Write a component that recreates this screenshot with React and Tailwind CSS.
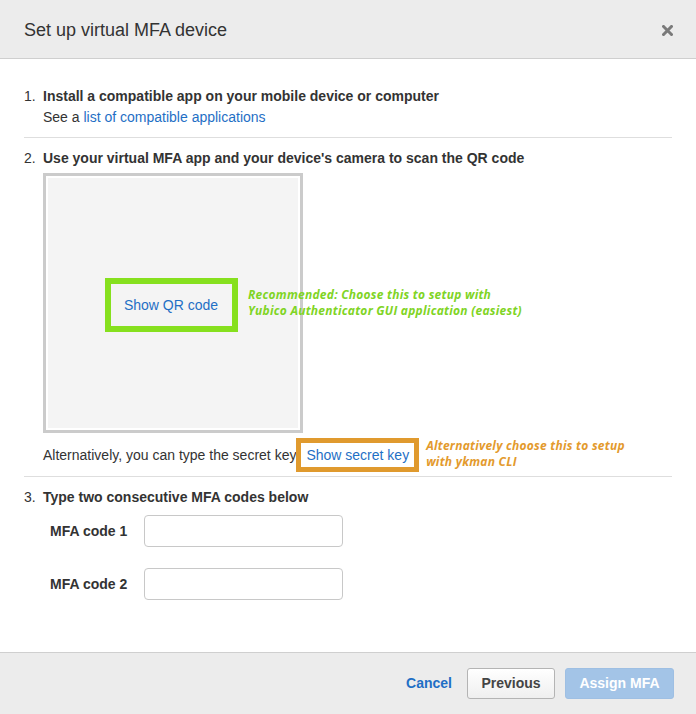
import React from "react";

const font = { fontFamily: '"Liberation Sans", Arial, sans-serif' };
const noteFont = { fontFamily: '"Open Sans", sans-serif' };

function Step({ n, title, children }) {
  return (
    <div className="flex text-[14px] leading-[20px] text-[#333]">
      <span className="w-[19px] shrink-0">{n}.</span>
      <div className="flex-1">
        <div className="font-bold">{title}</div>
        {children}
      </div>
    </div>
  );
}

function CodeField({ label }) {
  return (
    <div className="flex items-center ml-[7px]">
      <span className="w-[94px] font-bold text-[#333] text-[14px]">{label}</span>
      <input
        className="w-[199px] h-[32px] border border-[#c8c8c8] rounded-[4px] bg-white outline-none px-2"
        type="text"
      />
    </div>
  );
}

export default function App() {
  return (
    <div className="w-[696px] h-[714px] bg-white flex flex-col" style={font}>
      {/* Header */}
      <div className="h-[59px] shrink-0 bg-[#ececec] border-b border-[#cfcfcf] flex items-center justify-between pl-6 pr-[22px]">
        <h2 className="text-[18px] text-[#333] mt-[2px]">Set up virtual MFA device</h2>
        <svg width="11" height="11" viewBox="0 0 11 11" className="mr-[1px] mt-[2px]">
          <path d="M1.5 1.5 L9.5 9.5 M9.5 1.5 L1.5 9.5" stroke="#7a7a7a" strokeWidth="3" strokeLinecap="square" />
        </svg>
      </div>

      {/* Body */}
      <div className="flex-1 px-6 pt-[27px]">
        <Step n="1" title="Install a compatible app on your mobile device or computer">
          <div className="mt-[1px]">
            See a <a className="text-[#1f6fc5] cursor-pointer">list of compatible applications</a>
          </div>
        </Step>

        <div className="h-px bg-[#dedede] mt-[10px] mb-[10px]" />

        <Step n="2" title="Use your virtual MFA app and your device's camera to scan the QR code">
          <div className="relative mt-[5px] w-[260px] h-[260px] border-[3px] border-[#cbcbcb] p-[2px] bg-white">
            <div className="w-full h-full bg-[#f4f4f4] flex items-center justify-center">
              <div className="mt-[3px] -ml-[4px] w-[133px] h-[54px] border-[6px] border-[#86e01e] flex items-center justify-center">
                <span className="text-[#1f6fc5] text-[14px]">Show QR code</span>
              </div>
            </div>
            <div
              className="absolute left-[202px] top-[111px] w-[340px] text-[12px] leading-[16px] font-bold italic text-[#7fd425] tracking-[0.25px]"
              style={noteFont}
            >
              Recommended: Choose this to setup with
              <br />
              Yubico Authenticator GUI application (easiest)
            </div>
          </div>

          <div className="relative flex items-center h-[34px] mt-[5px]">
            <span>Alternatively, you can type the secret key</span>
            <div className="h-[34px] border-[5px] border-[#e09a2e] bg-white flex items-center px-[5px]">
              <span className="text-[#1f6fc5]">Show secret key</span>
            </div>
            <div
              className="ml-[7px] -mt-[2px] text-[12px] leading-[16px] font-bold italic text-[#e39a2d] tracking-[0.25px]"
              style={noteFont}
            >
              Alternatively choose this to setup
              <br />
              with ykman CLI
            </div>
          </div>
        </Step>

        <div className="h-px bg-[#dedede] mt-[4px] mb-[10px]" />

        <Step n="3" title="Type two consecutive MFA codes below">
          <div className="mt-[8px] flex flex-col gap-[21px] -ml-[19px] pl-[19px]">
            <CodeField label="MFA code 1" />
            <CodeField label="MFA code 2" />
          </div>
        </Step>
      </div>

      {/* Footer */}
      <div className="h-[62px] shrink-0 bg-[#ececec] border-t border-[#cfcfcf] flex items-center justify-end pr-[22px] gap-[10px]">
        <a className="text-[#1f6fc5] font-bold text-[14px] mr-[5px] cursor-pointer">Cancel</a>
        <button className="w-[88px] h-[31px] rounded-[3px] border border-[#b4b4b4] bg-gradient-to-b from-white to-[#efefef] text-[#444] font-bold text-[14px]">
          Previous
        </button>
        <button className="w-[109px] h-[31px] rounded-[3px] border border-[#9ebfe3] bg-[#a3c4e7] text-white font-bold text-[14px]">
          Assign MFA
        </button>
      </div>
    </div>
  );
}
